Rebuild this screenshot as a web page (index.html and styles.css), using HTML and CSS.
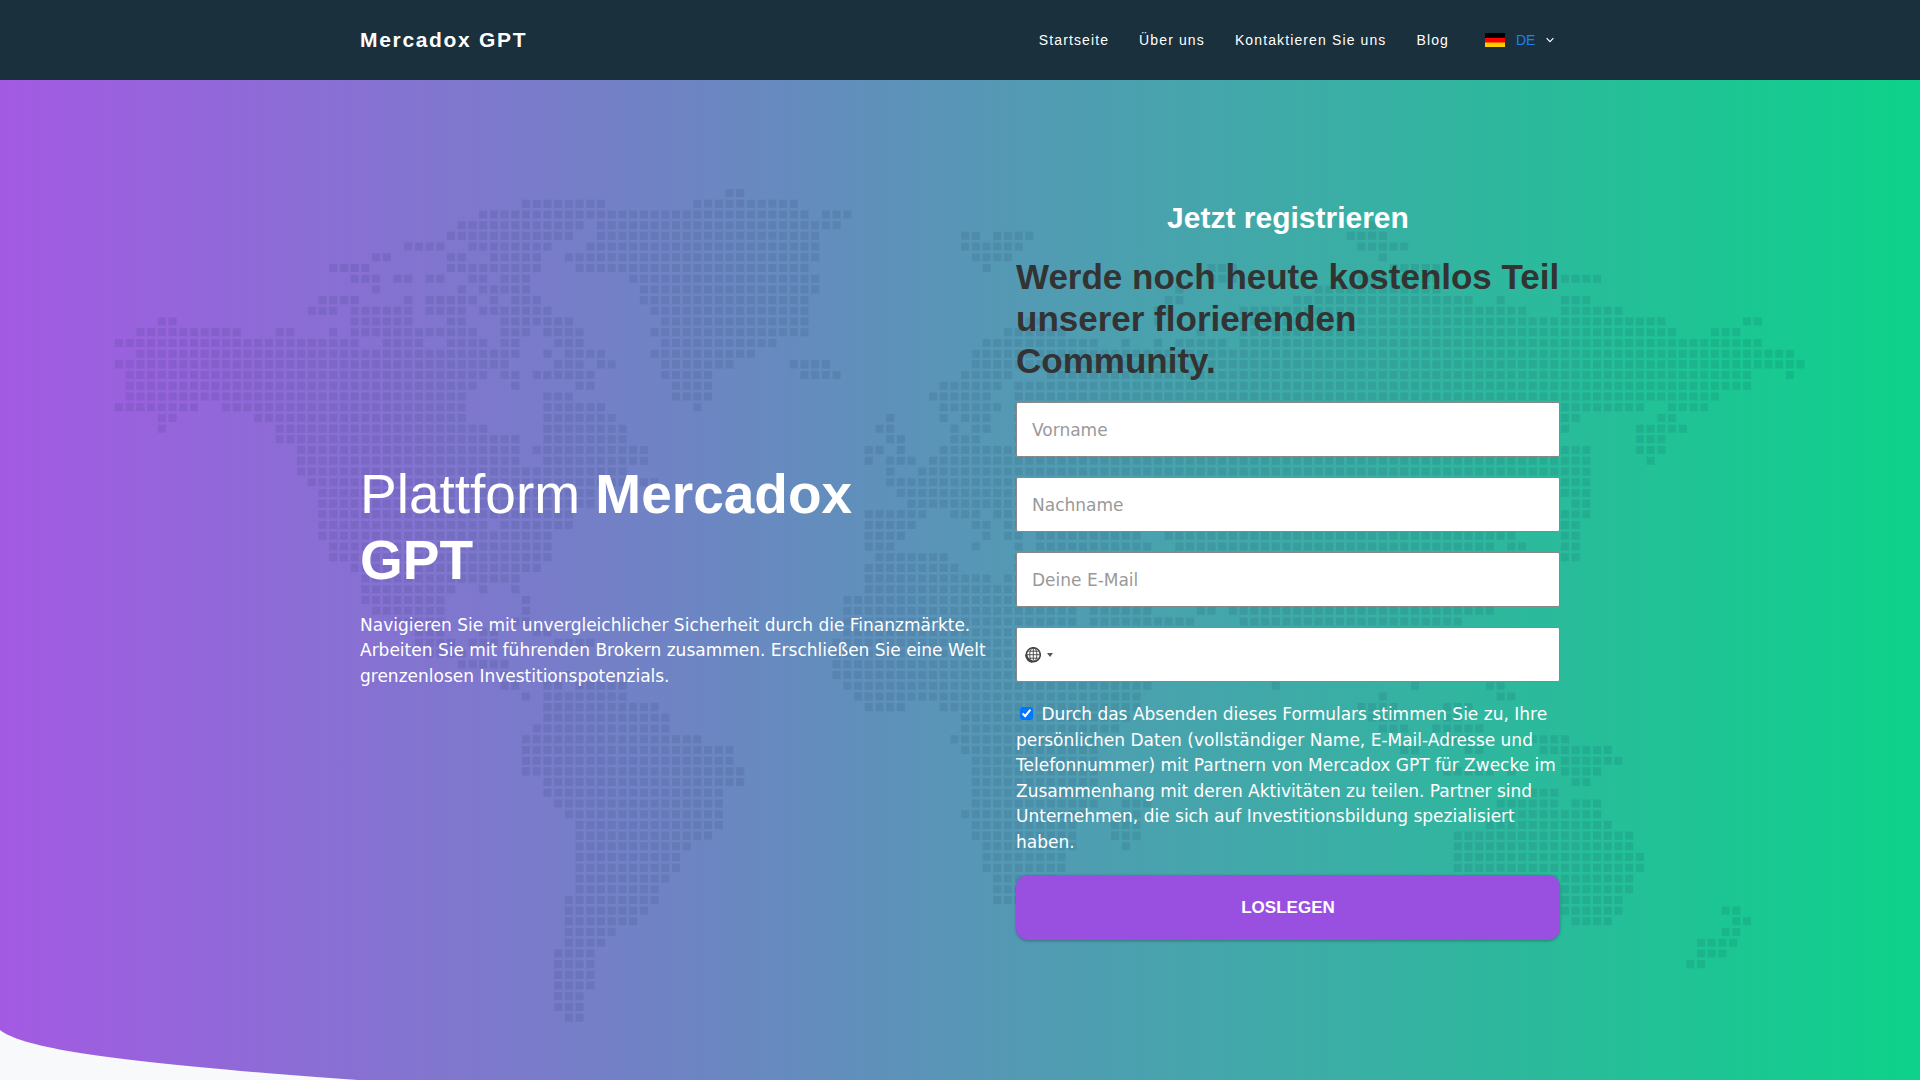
FILE: index.html
```html
<!DOCTYPE html>
<html lang="de">
<head>
    <meta charset="UTF-8">
    <meta name="viewport" content="width=device-width, initial-scale=1.0">
    <title>Mercadox GPT</title>
    <link rel="stylesheet" href="styles.css">
</head>
<body>
    <header class="header">
        <div class="container header-inner">
            <a class="logo" href="#">Mercadox GPT</a>
            <nav class="nav">
                <a href="#">Startseite</a>
                <a href="#">Über uns</a>
                <a href="#">Kontaktieren Sie uns</a>
                <a href="#">Blog</a>
                <div class="lang">
                    <svg class="flag" viewBox="0 0 20 14" aria-hidden="true">
                        <rect width="20" height="5" fill="#000"/>
                        <rect y="5" width="20" height="5" fill="#f00"/>
                        <rect y="9.5" width="20" height="4.5" fill="#fc0"/>
                    </svg>
                    <select class="lang-select" aria-label="Sprache">
                        <option>DE</option>
                        <option>EN</option>
                    </select>
                    <svg class="chevron" viewBox="0 0 8 6" aria-hidden="true">
                        <path d="M.6 1.2 4 4.6 7.4 1.2" fill="none" stroke="#fff" stroke-width="1.2"/>
                    </svg>
                </div>
            </nav>
        </div>
    </header>

    <main class="hero">
        <!-- World map: one subpath per run of squares, the dash pattern cuts it into cells -->
        <svg class="map" viewBox="0 -0.375 157.75 77.75" aria-hidden="true">
            <path d="M57 0h2
                M38 1h8M54 1h10
                M34 2h31M66 2h3
                M32 3h12M45 3h23M117 3h1
                M31 4h12M45 4h21M79 4h2M82 4h4M115 4h4
                M27 5h4M33 5h8M44 5h22M79 5h6M116 5h5
                M24 6h2M31 6h2M35 6h5M42 6h24M80 6h4M118 6h1
                M20 7h4M31 7h9M43 7h22M81 7h1M102 7h3M119 7h5
                M22 8h3M26 8h2M29 8h2M33 8h2M36 8h3M48 8h18M102 8h3M116 8h8M135 8h4
                M24 9h1M32 9h1M34 9h5M49 9h17M99 9h1M112 9h12
                M19 10h4M27 10h1M29 10h5M35 10h1M37 10h3M49 10h16M98 10h2M110 10h17M129 10h1M135 10h3
                M18 11h3M22 11h6M29 11h4M34 11h7M50 11h15M97 11h2M105 11h27M135 11h6
                M4 12h2M22 12h6M31 12h2M36 12h7M51 12h14M85 12h2M97 12h1M105 12h40M152 12h2
                M2 13h10M15 13h2M20 13h1M22 13h12M36 13h3M40 13h4M50 13h15M83 13h6M101 13h1M105 13h41M149 13h3
                M0 14h23M25 14h4M31 14h4M36 14h2M41 14h3M51 14h11M81 14h11M94 14h1M97 14h1M99 14h5M105 14h49
                M2 15h36M40 15h1M42 15h4M50 15h10M80 15h77
                M0 16h37M41 16h3M45 16h2M51 16h7M63 16h4M80 16h78
                M1 17h34M36 17h2M39 17h6M51 17h5M64 17h4M79 17h5M87 17h66M156 17h1
                M1 18h33M37 18h1M43 18h2M52 18h4M77 18h6M84 18h69
                M1 19h32M40 19h3M52 19h4M76 19h6M84 19h66
                M0 20h8M10 20h23M40 20h6M54 20h1M77 20h6M84 20h59M145 20h4
                M4 21h2M13 21h20M40 21h7M72 21h1M77 21h1M79 21h3M84 21h53M144 21h2
                M4 22h1M15 22h20M40 22h8M71 22h2M78 22h1M80 22h2M84 22h52M142 22h5
                M15 23h23M40 23h8M72 23h2M78 23h3M84 23h50M142 23h3
                M17 24h21M39 24h11M70 24h2M73 24h1M77 24h61M142 24h3
                M17 25h21M40 25h10M70 25h1M72 25h3M76 25h62M143 25h1
                M17 26h31M72 26h1M75 26h63
                M18 27h30M49 27h2M72 27h66
                M19 28h26M73 28h65
                M19 29h26M74 29h60M136 29h2
                M19 30h24M70 30h6M78 30h3M82 30h52M135 30h3
                M19 31h16M36 31h7M70 31h5M80 31h2M83 31h50M135 31h2
                M19 32h22M70 32h4M81 32h1M83 32h2M86 32h10M98 32h33M135 32h2
                M20 33h21M70 33h3M80 33h1M84 33h1M86 33h11M99 33h30M130 33h2M135 33h2
                M20 34h21M71 34h7M84 34h48M135 34h2
                M22 35h18M70 35h9M84 35h48
                M23 36h15M70 36h12M83 36h48
                M23 37h9M34 37h1M37 37h1M70 37h61
                M23 38h8M38 38h1M68 38h62
                M24 39h7M38 39h1M68 39h22M91 39h6M101 39h2M104 39h25
                M26 40h5M37 40h2M68 40h22M91 40h10M105 40h21
                M28 41h3M34 41h2M39 41h2M68 41h32M105 41h8
                M28 42h4M33 42h3M41 42h4M67 42h31M106 42h6
                M29 43h4M67 43h30M106 43h5
                M32 44h5M67 44h28M107 44h3
                M36 45h1M42 45h1M67 45h28M107 45h2
                M36 46h2M40 46h2M43 46h5M68 46h29M108 46h1M121 46h1M128 46h2
                M38 47h1M40 47h8M69 47h27M118 47h1M129 47h2
                M40 48h11M70 48h4M77 48h19M116 48h4M124 48h3
                M40 49h12M79 49h16M117 49h3M124 49h2
                M39 50h13M79 50h15M118 50h3M123 50h5
                M38 51h17M78 51h14M124 51h3M132 51h4
                M38 52h20M79 52h13M120 52h2M126 52h2M133 52h7
                M38 53h20M80 53h12M135 53h6
                M38 54h21M80 54h12M124 54h5M130 54h1M135 54h4
                M40 55h19M80 55h12M136 55h2
                M40 56h17M80 56h12M132 56h3
                M41 57h16M80 57h12M94 57h3M129 57h6M136 57h3
                M42 58h15M79 58h12M94 58h2M129 58h10
                M43 59h14M80 59h10M93 59h3M128 59h12
                M43 60h13M80 60h10M93 60h3M125 60h17
                M43 61h11M81 61h9M94 61h1M125 61h17
                M43 62h10M81 62h8M125 62h18
                M43 63h10M81 63h8M125 63h18
                M43 64h9M82 64h6M126 64h16
                M43 65h8M82 65h5M126 65h16
                M42 66h9M82 66h4M126 66h15
                M42 67h8M133 67h8M150 67h2
                M42 68h7M136 68h4M151 68h2
                M42 69h5M150 69h2
                M42 70h4M147.7 70h4
                M41 71h4M147.7 71h3
                M41 72h4M146.7 72h2
                M41 73h4M41 74h4M41 75h3M41 76h3M42 77h2"/>
        </svg>

        <div class="container hero-inner">
            <section class="intro">
                <h1>Plattform <strong>Mercadox GPT</strong></h1>
                <p>Navigieren Sie mit unvergleichlicher Sicherheit durch die Finanzmärkte. Arbeiten Sie mit führenden Brokern zusammen. Erschließen Sie eine Welt grenzenlosen Investitionspotenzials.</p>
            </section>

            <form class="signup">
                <h3>Jetzt registrieren</h3>
                <h2>Werde noch heute kostenlos Teil unserer florierenden Community.</h2>
                <input class="field" type="text" placeholder="Vorname" aria-label="Vorname">
                <input class="field" type="text" placeholder="Nachname" aria-label="Nachname">
                <input class="field" type="email" placeholder="Deine E-Mail" aria-label="Deine E-Mail">
                <div class="field phone">
                    <button class="country" type="button" aria-label="Land">
                        <svg class="globe" viewBox="0 0 16 16" aria-hidden="true">
                            <g fill="none" stroke="#444">
                                <circle cx="8.3" cy="7.7" r="7" stroke-width="1.5"/>
                                <path d="M8.3 1v13.4M1.5 7.7h13.6M3 4.2h10.6M3 11.2h10.6" stroke-width=".9"/>
                                <ellipse cx="8.3" cy="7.7" rx="3.6" ry="6.8" stroke-width=".9"/>
                                <path d="M1.2 7.5C1.2 11 4 14.6 7.4 14.8" stroke-width="2.4"/>
                            </g>
                        </svg>
                        <span class="caret"></span>
                    </button>
                    <input class="phone-input" type="tel" aria-label="Telefonnummer">
                </div>
                <label class="consent"><input type="checkbox" checked> Durch das Absenden dieses Formulars stimmen Sie zu, Ihre persönlichen Daten (vollständiger Name, E-Mail-Adresse und Telefonnummer) mit Partnern von Mercadox GPT für Zwecke im Zusammenhang mit deren Aktivitäten zu teilen. Partner sind Unternehmen, die sich auf Investitionsbildung spezialisiert haben.</label>
                <button class="submit" type="submit">LOSLEGEN</button>
            </form>
        </div>

        <svg class="curve" viewBox="0 0 1920 50" aria-hidden="true">
            <path d="M0 0C24 19 120 33 358 50H0Z" fill="#f7f9fb"/>
        </svg>
    </main>
</body>
</html>
```
FILE: styles.css
```css
* {
    box-sizing: border-box;
}
body {
    margin: 0;
    min-height: 100vh;
    display: flex;
    flex-direction: column;
    font-family: "DejaVu Sans", sans-serif;
    font-size: 17px;
    line-height: 1.5;
    color: #fff;
}
.container {
    width: 100%;
    max-width: 1200px;
    margin: 0 auto;
}

/* Header */
.header {
    background: #1a303c;
    font-family: "Liberation Sans", Arial, sans-serif;
}
.header-inner {
    display: flex;
    align-items: center;
    justify-content: space-between;
    min-height: 80px;
}
.logo,
.nav a {
    color: #fff;
    letter-spacing: 0.08em;
    text-decoration: none;
}
.logo {
    font-size: 21px;
    font-weight: bold;
}
.nav {
    display: flex;
    align-items: center;
    gap: 30px;
    font-size: 14px;
    padding-right: 6px;
}
.lang {
    display: flex;
    align-items: center;
    gap: 11px;
    padding-left: 6px;
}
.flag {
    width: 20px;
    height: 14px;
}
.lang-select {
    appearance: none;
    width: 19px;
    padding: 0;
    border: none;
    background: none;
    color: #1e80f0;
    font: 14px "Liberation Sans", Arial, sans-serif;
}
.chevron {
    width: 8px;
    height: 6px;
}

/* Hero */
.hero {
    position: relative;
    flex: 1;
    padding: 120px 0 130px;
    background: linear-gradient(90deg, #a35ae3, #0dd28a);
}
.map {
    position: absolute;
    top: 109px;
    left: 6%;
    width: 88%;
}
.map path {
    fill: none;
    stroke: #001a40;
    stroke-opacity: 0.09;
    stroke-width: 0.75;
    stroke-dasharray: 0.75 0.25;
}
.curve {
    position: absolute;
    left: 0;
    bottom: 0;
    width: 100%;
}
.hero-inner {
    position: relative;
    display: flex;
    align-items: center;
    justify-content: space-between;
    gap: 20px;
}
.intro {
    flex: 1;
    max-width: 636px;
}
.intro h1 {
    margin: 0 0 20px;
    max-width: 540px;
    font: 55px/1.2 "Liberation Sans", Arial, sans-serif;
}
.intro p {
    margin: 0;
}

/* Form */
.signup {
    display: flex;
    flex-direction: column;
    gap: 20px;
    width: 544px;
    padding-bottom: 10px;
}
.signup h3 {
    margin: 0;
    font: bold 30px/36px "Liberation Sans", Arial, sans-serif;
    text-align: center;
}
.signup h2 {
    margin: 0;
    color: #333;
    font: bold 35px/42px "Liberation Sans", Arial, sans-serif;
}
.field {
    width: 100%;
    height: 55px;
    padding: 0 15px;
    border: 1px solid #888;
    border-radius: 2px;
    background: #fff;
    font: 17px "DejaVu Sans", sans-serif;
}
.field::placeholder {
    color: #999;
}
.phone {
    display: flex;
    align-items: center;
    padding: 0 8px;
}
.country {
    display: flex;
    align-items: center;
    gap: 6px;
    padding: 0;
    border: none;
    background: none;
}
.globe {
    width: 16px;
    height: 16px;
}
.caret {
    border: 3px solid transparent;
    border-top: 4px solid #555;
    border-bottom: none;
}
.phone-input {
    flex: 1;
    height: 100%;
    border: none;
    outline: none;
    background: none;
    font: inherit;
}
.submit {
    height: 65px;
    border: none;
    border-radius: 12px;
    background: #9950e0;
    box-shadow: 0 1px 3px rgba(0, 0, 0, 0.3);
    color: #fff;
    font: bold 17px "Liberation Sans", Arial, sans-serif;
    cursor: pointer;
}
```
